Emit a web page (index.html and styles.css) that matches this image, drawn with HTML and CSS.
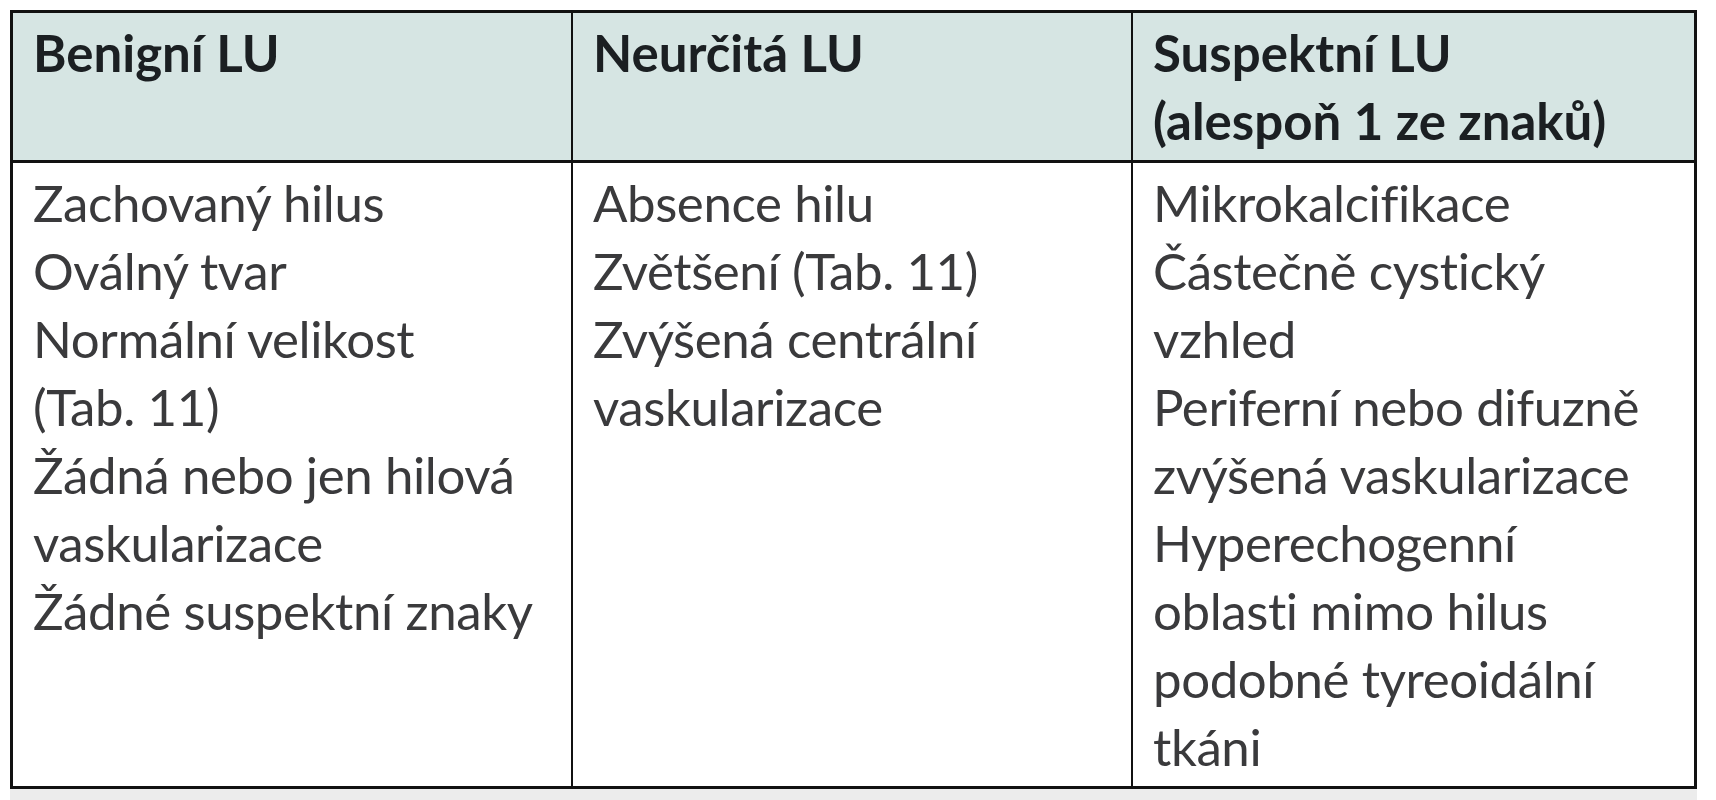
FILE: index.html
```html
<!DOCTYPE html>
<html lang="cs">
<head>
<meta charset="utf-8">
<title>Lymfatické uzliny</title>
<link rel="stylesheet" href="styles.css">
</head>
<body>
<div class="figure">
  <div class="lu-table">
    <div class="cell head">Benigní LU</div>
    <div class="cell head">Neurčitá LU</div>
    <div class="cell head last">Suspektní LU<br>(alespoň 1 ze znaků)</div>
    <div class="cell body">
      <div>Zachovaný hilus</div>
      <div>Oválný tvar</div>
      <div>Normální velikost<br>(Tab. 11)</div>
      <div>Žádná nebo jen hilová<br>vaskularizace</div>
      <div>Žádné suspektní znaky</div>
    </div>
    <div class="cell body">
      <div>Absence hilu</div>
      <div>Zvětšení (Tab. 11)</div>
      <div>Zvýšená centrální<br>vaskularizace</div>
    </div>
    <div class="cell body last">
      <div>Mikrokalcifikace</div>
      <div>Částečně cystický<br>vzhled</div>
      <div>Periferní nebo difuzně<br>zvýšená vaskularizace</div>
      <div>Hyperechogenní<br>oblasti mimo hilus<br>podobné tyreoidální<br>tkáni</div>
    </div>
  </div>
  <div class="shadow-band"></div>
</div>
</body>
</html>
```

FILE: styles.css
```css
html, body {
  margin: 0;
  padding: 0;
  background: #ffffff;
}

.figure {
  padding: 10px 0 0 10px;
  width: 1687px;
}

.lu-table {
  display: grid;
  grid-template-columns: 560px 560px 1fr;
  border: 3px solid #111111;
  font-family: "Lato", "Open Sans", sans-serif;
  font-size: 51px;
  line-height: 68px;
}

.cell {
  padding: 6px 16px 5px 20px;
  border-right: 2px solid #111111;
  white-space: nowrap;
}

.cell.last {
  border-right: none;
}

.head {
  background: #d6e5e3;
  color: #1b1f22;
  font-weight: 700;
  border-bottom: 3px solid #111111;
}

.body {
  color: #3a3a3c;
  font-weight: 400;
  letter-spacing: -0.4px;
}

.shadow-band {
  height: 13px;
  background: #ececec;
}
```
